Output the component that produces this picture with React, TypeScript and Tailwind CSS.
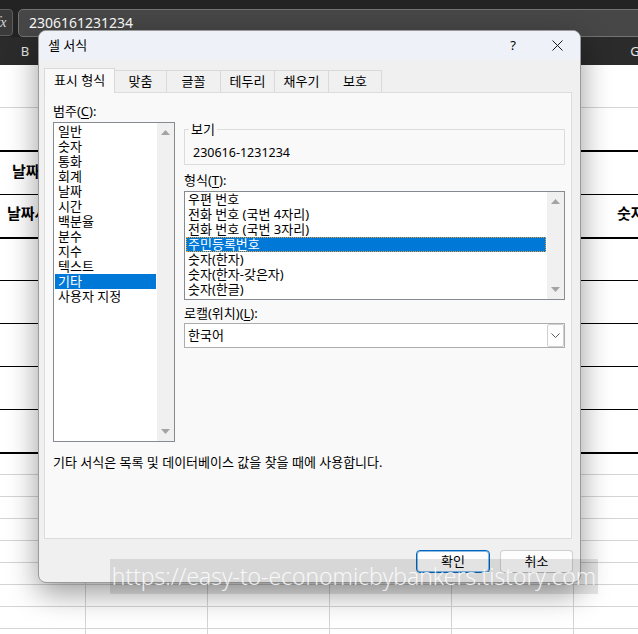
import React from 'react';

const categories = [
    '일반',
    '숫자',
    '통화',
    '회계',
    '날짜',
    '시간',
    '백분율',
    '분수',
    '지수',
    '텍스트',
    '기타',
    '사용자 지정',
];

const formats = [
    '우편 번호',
    '전화 번호 (국번 4자리)',
    '전화 번호 (국번 3자리)',
    '주민등록번호',
    '숫자(한자)',
    '숫자(한자-갖은자)',
    '숫자(한글)',
];

const tabs = [
    { label: '표시 형식', w: 'w-[71px]' },
    { label: '맞춤', w: 'w-[52px]' },
    { label: '글꼴', w: 'w-[54px]' },
    { label: '테두리', w: 'w-[54px]' },
    { label: '채우기', w: 'w-[54px]' },
    { label: '보호', w: 'w-[53px]' },
];

const columns = ['B', 'C', 'D', 'E', 'F', 'G'];

function ArrowUp() {
    return (
        <svg width="9" height="5" viewBox="0 0 9 5">
            <path d="M4.5 0 L9 5 L0 5 Z" fill="#a3a3a3" />
        </svg>
    );
}

function ArrowDown() {
    return (
        <svg width="9" height="5" viewBox="0 0 9 5">
            <path d="M0 0 L9 0 L4.5 5 Z" fill="#a3a3a3" />
        </svg>
    );
}

function ScrollTrack() {
    return (
        <div className="flex w-[17px] flex-col items-center justify-between bg-[#f0f0f0] py-[7px]">
            <ArrowUp />
            <ArrowDown />
        </div>
    );
}

function FormulaBar() {
    return (
        <div className="flex h-[37px] items-start bg-[#232323] pt-[9px]">
            <div className="-ml-[10px] flex h-[27px] w-[23px] items-center justify-center rounded-[4px] border border-[#5e5e5e] bg-[#3a3a3a] font-['Liberation_Serif',serif] text-[14px] text-[#d8d8d8] italic">
                fx
            </div>
            <div className="-mr-[12px] ml-[5px] h-[28px] flex-1 rounded-[5px] border border-[#737373] bg-[#474747] pl-[10px] text-[14px] leading-[26px] text-white">
                2306161231234
            </div>
        </div>
    );
}

function ColumnHeader() {
    return (
        <div className="flex h-[28px] bg-[#2b2b2b] text-[13px] leading-[28px] text-[#e4e4e4]">
            <div className="-ml-[36px] flex">
                {columns.map((c) => (
                    <div key={c} className="w-[122px] text-center">
                        {c}
                    </div>
                ))}
            </div>
        </div>
    );
}

function GridRow() {
    return (
        <div className="flex h-[22px] border-b border-[#d4d4d4]">
            <div className="-ml-[36px] flex">
                {columns.map((c) => (
                    <div
                        key={c}
                        className="h-full w-[122px] border-r border-[#d4d4d4]"
                    />
                ))}
            </div>
        </div>
    );
}

function Sheet() {
    return (
        <div className="bg-white text-[15px] font-bold text-black">
            <div className="h-[43px] border-b border-[#d4d4d4]" />
            <div className="h-[44px] border-b-2 border-black" />
            <div className="flex h-[43px] items-center border-b border-black pb-[4px] pl-[12px]">
                날짜
            </div>
            <div className="flex h-[44px] items-center border-b-2 border-black pb-[5px] pl-[7px]">
                <span>날짜서</span>
                <span className="ml-auto w-[21px] whitespace-nowrap">숫자서식</span>
            </div>
            <div className="h-[42px] border-b border-black" />
            <div className="h-[43px] border-b border-black" />
            <div className="h-[43px] border-b border-black" />
            <div className="h-[43px] border-b border-black" />
            <div className="h-[44px] border-b-2 border-black" />
            <div className="h-[21px] border-b border-[#d4d4d4]" />
            {[0, 1, 2, 3, 4, 5, 6, 7].map((i) => (
                <GridRow key={i} />
            ))}
        </div>
    );
}

function CategoryList() {
    return (
        <div className="flex h-[320px] w-[122px] border border-[#868a91] bg-white">
            <div className="flex-1 px-[1px] pt-[1px]">
                {categories.map((c) => (
                    <div
                        key={c}
                        className={
                            c === '기타'
                                ? 'h-[15px] bg-[#0078d7] pl-[3px] leading-[15px] text-white'
                                : 'h-[15px] pl-[3px] leading-[15px]'
                        }
                    >
                        {c}
                    </div>
                ))}
            </div>
            <ScrollTrack />
        </div>
    );
}

function FormatPanel() {
    return (
        <div className="h-[447px] w-[528px] border border-[#dcdcdc] bg-[#f9f9f9] pt-[10px] pl-[8px]">
            <div className="leading-[16px]">
                범주(<span className="underline underline-offset-2">C</span>):
            </div>
            <div className="mt-[3px] flex">
                <CategoryList />

                <div className="ml-[9px] w-[381px]">
                    {/* Preview group */}
                    <fieldset className="border border-[#dcdcdc] pl-[4px]">
                        <legend className="px-[2px] leading-[15px]">보기</legend>
                        <div className="pt-[8px] pb-[4px] pl-[4px] text-[12.5px] leading-[15px]">
                            230616-1231234
                        </div>
                    </fieldset>

                    <div className="mt-[7px] leading-[16px]">
                        형식(<span className="underline underline-offset-2">T</span>):
                    </div>
                    <div className="mt-[3px] flex h-[109px] border border-[#868a91] bg-white">
                        <div className="flex-1 px-[1px]">
                            {formats.map((f) => (
                                <div
                                    key={f}
                                    className={
                                        f === '주민등록번호'
                                            ? 'h-[15px] bg-[#0078d7] pl-[2px] leading-[15px] text-white outline-1 -outline-offset-1 outline-[#e8a035] outline-dotted'
                                            : 'h-[15px] pl-[2px] leading-[15px]'
                                    }
                                >
                                    {f}
                                </div>
                            ))}
                        </div>
                        <ScrollTrack />
                    </div>

                    <div className="mt-[5px] leading-[16px]">
                        로캘(위치)(<span className="underline underline-offset-2">L</span>):
                    </div>
                    <div className="mt-[2px] flex h-[25px] items-center border border-[#adadad] bg-white pl-[3px]">
                        <span>한국어</span>
                        <div className="ml-auto flex h-[23px] w-[17px] items-center justify-center rounded-[2px] border border-[#cfcfcf] bg-[#fdfdfd]">
                            <svg width="9" height="5" viewBox="0 0 9 5">
                                <path
                                    d="M0.5 0.5 L4.5 4.5 L8.5 0.5"
                                    stroke="#5a5a5a"
                                    fill="none"
                                />
                            </svg>
                        </div>
                    </div>
                </div>
            </div>
            <p className="mt-[12px] leading-[16px]">
                기타 서식은 목록 및 데이터베이스 값을 찾을 때에 사용합니다.
            </p>
        </div>
    );
}

function FormatCellsDialog() {
    return (
        <div className="absolute top-[30px] left-[38px] flex h-[553px] w-[543px] flex-col overflow-hidden rounded-[8px] border border-[#9a9a9a] bg-[#f0f0f0] shadow-[0_10px_30px_rgba(0,0,0,0.4)]">
            {/* Title bar */}
            <div className="flex h-[29px] items-start bg-[#eef2f8] pt-[6px] pl-[9px]">
                <span className="leading-[16px]">셀 서식</span>
                <div className="ml-auto flex">
                    <div className="flex w-[46px] justify-center pl-[4px] text-[13px] leading-[16px]">
                        ?
                    </div>
                    <div className="flex h-[16px] w-[46px] items-center justify-center">
                        <svg width="11" height="11" viewBox="0 0 11 11">
                            <path
                                d="M0.5 0.5 L10.5 10.5 M10.5 0.5 L0.5 10.5"
                                stroke="#1a1a1a"
                                strokeWidth="1"
                            />
                        </svg>
                    </div>
                </div>
            </div>

            <div className="pl-[5px]">
                {/* Tabs */}
                <div className="flex h-[32px] items-end pt-[8px]">
                    {tabs.map((t, i) =>
                        i === 0 ? (
                            <div
                                key={t.label}
                                className={`relative z-10 -mb-px flex h-[25px] items-center justify-center border-x border-t border-[#d9d9d9] bg-[#f9f9f9] pb-[1px] ${t.w}`}
                            >
                                {t.label}
                            </div>
                        ) : (
                            <div
                                key={t.label}
                                className={`flex h-[22px] items-center justify-center border-t border-r border-[#d9d9d9] ${t.w}`}
                            >
                                {t.label}
                            </div>
                        ),
                    )}
                </div>
                <FormatPanel />
            </div>

            {/* Buttons */}
            <div className="mt-[11px] flex justify-end gap-[10px] pr-[7px]">
                <button className="h-[23px] w-[74px] rounded-[4px] border border-[#0067c0] bg-[#fdfdfd] shadow-[inset_0_0_0_1px_rgba(0,103,192,0.45)]">
                    확인
                </button>
                <button className="h-[23px] w-[73px] rounded-[4px] border border-[#d0d0d0] border-b-[#b8b8b8] bg-[#fdfdfd]">
                    취소
                </button>
            </div>
        </div>
    );
}

export default function App() {
    return (
        <div className="relative h-[634px] w-[638px] overflow-hidden bg-white font-[family-name:'Noto_Sans','Noto_Sans_CJK_KR',sans-serif] text-[13px] text-black">
            <FormulaBar />
            <ColumnHeader />
            <Sheet />
            <FormatCellsDialog />

            {/* Blog watermark */}
            <div className="absolute top-[559px] left-[110px] flex h-[35px] w-[488px] items-center justify-center bg-black/10 font-['Open_Sans',sans-serif] text-[23px] leading-none font-light whitespace-nowrap text-white/85">
                https://easy-to-economicbybankers.tistory.com
            </div>
        </div>
    );
}
